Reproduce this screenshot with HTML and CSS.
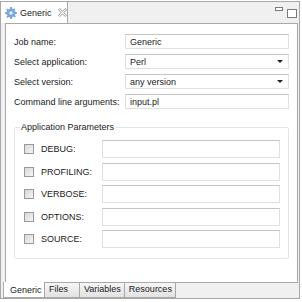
FILE: index.html
```html
<!DOCTYPE html>
<html lang="en">
<head>
    <meta charset="UTF-8">
    <title>Generic</title>
    <link rel="stylesheet" href="styles.css">
</head>
<body>
    <div class="view">
        <div class="view-tabs">
            <div class="view-tab">
                <svg class="gear" width="12" height="12" viewBox="0 0 16 16">
                    <path d="M7 0h2l.4 2.2 1.4.6 1.8-1.3 1.4 1.4-1.3 1.8.6 1.4L16 7v2l-2.2.4-.6 1.4 1.3 1.8-1.4 1.4-1.8-1.3-1.4.6L9 16H7l-.4-2.2-1.4-.6-1.8 1.3-1.4-1.4 1.3-1.8-.6-1.4L0 9V7l2.2-.4.6-1.4-1.3-1.8 1.4-1.4 1.8 1.3 1.4-.6z" fill="#7aa6dc"/>
                    <circle cx="8" cy="8" r="2.4" fill="#e6eef8"/>
                </svg>
                <span>Generic</span>
                <svg class="close" width="9" height="9" viewBox="0 0 9 9">
                    <path d="M0.5 1.8L1.8 0.5 4.5 3.2 7.2 0.5 8.5 1.8 5.8 4.5 8.5 7.2 7.2 8.5 4.5 5.8 1.8 8.5 0.5 7.2 3.2 4.5z" fill="#fff" stroke="#7d7d7d" stroke-width="0.8"/>
                </svg>
            </div>
            <div class="view-controls">
                <span class="ctl-min"></span>
                <span class="ctl-max"></span>
            </div>
        </div>

        <div class="editor">
            <div class="form">
                <div class="row">
                    <label>Job name:</label>
                    <div class="field">Generic</div>
                </div>
                <div class="row">
                    <label>Select application:</label>
                    <div class="field combo">Perl<span class="arrow"></span></div>
                </div>
                <div class="row">
                    <label>Select version:</label>
                    <div class="field combo">any version<span class="arrow"></span></div>
                </div>
                <div class="row">
                    <label>Command line arguments:</label>
                    <div class="field">input.pl</div>
                </div>

                <fieldset class="group">
                    <legend>Application Parameters</legend>
                    <div class="param"><span class="check"></span><label>DEBUG:</label><div class="field tall"></div></div>
                    <div class="param"><span class="check"></span><label>PROFILING:</label><div class="field tall"></div></div>
                    <div class="param"><span class="check"></span><label>VERBOSE:</label><div class="field tall"></div></div>
                    <div class="param"><span class="check"></span><label>OPTIONS:</label><div class="field tall"></div></div>
                    <div class="param"><span class="check"></span><label>SOURCE:</label><div class="field tall"></div></div>
                </fieldset>
            </div>
        </div>

        <div class="page-tabs">
            <div class="page-tab active">Generic</div>
            <div class="page-tab">Files</div>
            <div class="page-tab">Variables</div>
            <div class="page-tab">Resources</div>
        </div>
    </div>
</body>
</html>
```

FILE: styles.css
```css
body {
    margin: 0;
    background-color: #fff;
    font-family: "Liberation Sans", Arial, sans-serif;
    font-size: 9px;
    color: #1a1a1a;
}

.view {
    width: 300px;
    height: 298px;
    margin-top: 1px;
    box-sizing: border-box;
    border: 1px solid #a8a8a8;
    background-color: #f0f0f0;
    display: flex;
    flex-direction: column;
}

.view-tabs {
    height: 21px;
    display: flex;
    justify-content: space-between;
}

.view-tab {
    height: 22px;
    width: 68px;
    margin-top: -1px;
    margin-left: -1px;
    box-sizing: border-box;
    background-color: #fff;
    border: 1px solid #a8a8a8;
    border-bottom: none;
    display: flex;
    align-items: center;
    padding-left: 4px;
    gap: 3px;
}

.view-tab .close {
    margin-left: 3px;
}

.view-controls {
    display: flex;
    align-items: flex-start;
    gap: 4px;
    padding: 5px 2px 0 0;
}

.ctl-min {
    width: 6px;
    height: 2px;
    border: 1px solid #7a7a7a;
    background-color: #fff;
}

.ctl-max {
    width: 8px;
    height: 7px;
    margin-top: 2px;
    border: 1px solid #7a7a7a;
    background-color: #fff;
}

.editor {
    flex: 1;
    margin: 0 1px 0 4px;
    background-color: #fff;
    border: 1px solid #a8a8a8;
}

.form {
    padding: 10px 8px 0 8px;
}

.row {
    display: flex;
    align-items: center;
    height: 15px;
    margin-bottom: 5px;
}

.row label {
    width: 111px;
    white-space: nowrap;
}

.field {
    flex: 1;
    height: 15px;
    box-sizing: border-box;
    border: 1px solid #e0e0e0;
    border-top-color: #c4c4c4;
    padding-left: 4px;
    display: flex;
    align-items: center;
    position: relative;
}

.arrow {
    position: absolute;
    right: 5px;
    top: 5px;
    border-left: 3px solid transparent;
    border-right: 3px solid transparent;
    border-top: 3px solid #222;
}

.group {
    margin: 12px 0 0 0;
    padding: 1px 8px 10px 9px;
    border: 1px solid #dfe5ec;
    border-radius: 2px;
}

.group legend {
    padding: 0 1px;
    margin-left: -4px;
    line-height: 12px;
}

.param {
    display: flex;
    align-items: center;
    height: 18px;
    margin-top: 4.5px;
}

.param:first-of-type {
    margin-top: 6px;
}

.check {
    width: 8px;
    height: 8px;
    border: 1px solid #999;
    background: linear-gradient(135deg, #d8d8d8, #f4f4f4);
    margin-right: 7px;
}

.param label {
    width: 61px;
}

.field.tall {
    height: 18px;
}

.page-tabs {
    height: 15px;
    display: flex;
    padding-left: 2px;
}

.page-tab {
    height: 15px;
    min-width: 35px;
    box-sizing: border-box;
    padding: 0 3px 0 4px;
    border-right: 1px solid #a8a8a8;
    border-bottom: 1px solid #a8a8a8;
    background: linear-gradient(#f6f6f6, #e2e2e2);
    line-height: 13px;
}

.page-tab.active {
    width: 42px;
    height: 16px;
    margin-top: -1px;
    background: #fff;
    border-left: 1px solid #a8a8a8;
    padding-top: 2px;
    padding-left: 6px;
}
```
